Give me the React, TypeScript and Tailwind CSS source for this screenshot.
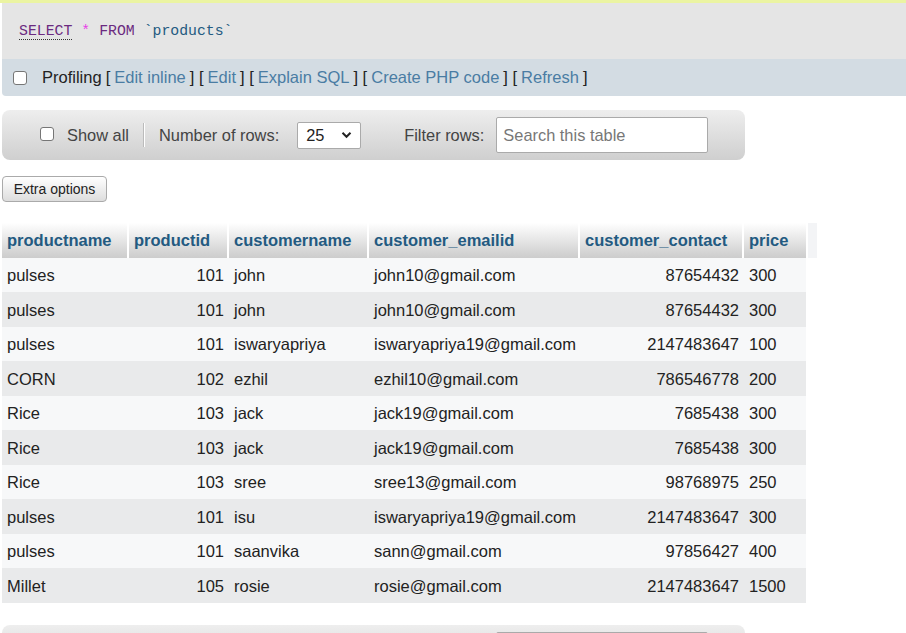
const rows = [
  ["pulses", "101", "john", "john10@gmail.com", "87654432", "300"],
  ["pulses", "101", "john", "john10@gmail.com", "87654432", "300"],
  ["pulses", "101", "iswaryapriya", "iswaryapriya19@gmail.com", "2147483647", "100"],
  ["CORN", "102", "ezhil", "ezhil10@gmail.com", "786546778", "200"],
  ["Rice", "103", "jack", "jack19@gmail.com", "7685438", "300"],
  ["Rice", "103", "jack", "jack19@gmail.com", "7685438", "300"],
  ["Rice", "103", "sree", "sree13@gmail.com", "98768975", "250"],
  ["pulses", "101", "isu", "iswaryapriya19@gmail.com", "2147483647", "300"],
  ["pulses", "101", "saanvika", "sann@gmail.com", "97856427", "400"],
  ["Millet", "105", "rosie", "rosie@gmail.com", "2147483647", "1500"],
];

const headers = [
  { label: "productname", w: "w-[127px]" },
  { label: "productid", w: "w-[100px]" },
  { label: "customername", w: "w-[140px]" },
  { label: "customer_emailid", w: "w-[211px]" },
  { label: "customer_contact", w: "w-[164px]" },
  { label: "price", w: "w-[62px]" },
];

const numericCols = [1, 4];

function CheckBox() {
  return (
    <span className="inline-block w-[14px] h-[14px] rounded-[3px] border border-[#767676] bg-white shrink-0" />
  );
}

function NavPanel() {
  return (
    <div className="ml-[2px] w-[743px] h-[50px] rounded-lg bg-gradient-to-b from-[#eeeeee] to-[#cfcfcf] flex items-center text-[16.4px] text-[#444]">
      <span className="ml-[38px]">
        <CheckBox />
      </span>
      <span className="ml-[13px]">Show all</span>
      <span className="ml-[14px] w-[2px] h-[24px] bg-[#bbbbbb] border-r border-white" />
      <span className="ml-[14px]">Number of rows:</span>
      <div className="ml-[18px] w-[64px] h-[27px] bg-white border border-[#aaaaaa] rounded-[2px] flex items-center justify-between pl-[8px] pr-[8px] text-[#222]">
        <span>25</span>
        <svg width="11" height="8" viewBox="0 0 11 8" fill="none">
          <path d="M1.5 1.8 L5.5 5.8 L9.5 1.8" stroke="#222" strokeWidth="2" />
        </svg>
      </div>
      <span className="ml-[43px]">Filter rows:</span>
      <div className="ml-[12px] w-[212px] h-[36px] bg-white border border-[#aaaaaa] rounded-[2px] flex items-center pl-[6px] text-[#777]">
        Search this table
      </div>
    </div>
  );
}

export default function App() {
  return (
    <div className="bg-white min-h-screen font-['Liberation_Sans',Arial,sans-serif] text-[#222]">
      {/* Success message edge */}
      <div className="h-[3px] bg-[#ebf4a2]" />

      {/* SQL query box */}
      <div className="ml-[2px] h-[56px] bg-[#e5e5e5] flex items-center pl-[17px] pt-[1px] font-['Liberation_Mono',monospace] text-[14.8px]">
        <span className="text-[#6b2a80] border-b border-dotted border-[#333] leading-[16px]">SELECT</span>
        <span className="ml-[9px] text-[#e83fe8]">*</span>
        <span className="ml-[9px] text-[#6b2a80]">FROM</span>
        <span className="ml-[9px] text-[#235a81]">`products`</span>
      </div>

      {/* Profiling bar */}
      <div className="ml-[2px] h-[37px] bg-[#d3dce3] rounded-bl-[4px] flex items-center pl-[11px] text-[16.5px]">
        <CheckBox />
        <span className="ml-[15px] text-[#222]">Profiling</span>
        <span className="ml-[4px] text-[#222]">[</span>
        <span className="ml-[4px] text-[#4a7ca3]">Edit inline</span>
        <span className="ml-[4px] text-[#222]">] [</span>
        <span className="ml-[4px] text-[#4a7ca3]">Edit</span>
        <span className="ml-[4px] text-[#222]">] [</span>
        <span className="ml-[4px] text-[#4a7ca3]">Explain SQL</span>
        <span className="ml-[4px] text-[#222]">] [</span>
        <span className="ml-[4px] text-[#4a7ca3]">Create PHP code</span>
        <span className="ml-[4px] text-[#222]">] [</span>
        <span className="ml-[4px] text-[#4a7ca3]">Refresh</span>
        <span className="ml-[4px] text-[#222]">]</span>
      </div>

      <div className="h-[14px]" />
      <NavPanel />

      <div className="mt-[16px] ml-[2px]">
        <button className="h-[26px] w-[105px] rounded-[4px] border border-[#aaaaaa] bg-gradient-to-b from-white to-[#dddddd] text-[14px] text-[#222]">
          Extra options
        </button>
      </div>

      {/* Result table */}
      <div className="mt-[21px] ml-[2px] flex items-start">
        <table className="table-fixed border-separate border-spacing-0 text-[16.5px]">
          <thead>
            <tr className="h-[35px]">
              {headers.map((h, i) => (
                <th
                  key={h.label}
                  className={`${h.w} ${i < headers.length - 1 ? "border-r-2 border-white" : ""} bg-gradient-to-b from-white to-[#cccccc] text-left pl-[5px] font-bold text-[#235a81]`}
                >
                  {h.label}
                </th>
              ))}
            </tr>
          </thead>
          <tbody>
            {rows.map((r, ri) => (
              <tr
                key={ri}
                className={`${ri % 2 === 0 ? "bg-[#f7f8f9]" : "bg-[#e9eaeb]"} ${ri % 2 === 0 ? "h-[34px]" : "h-[35px]"}`}
              >
                {r.map((c, ci) => (
                  <td
                    key={ci}
                    className={
                      numericCols.includes(ci)
                        ? "text-right pr-[5px] pt-[1px] whitespace-nowrap"
                        : "text-left pl-[5px] pt-[1px] whitespace-nowrap"
                    }
                  >
                    {c}
                  </td>
                ))}
              </tr>
            ))}
          </tbody>
        </table>
        <div className="ml-[2px] w-[9px] h-[35px] bg-[#f3f4f6]" />
      </div>

      <div className="h-[22px]" />
      <NavPanel />
      <div className="h-[20px]" />
    </div>
  );
}
